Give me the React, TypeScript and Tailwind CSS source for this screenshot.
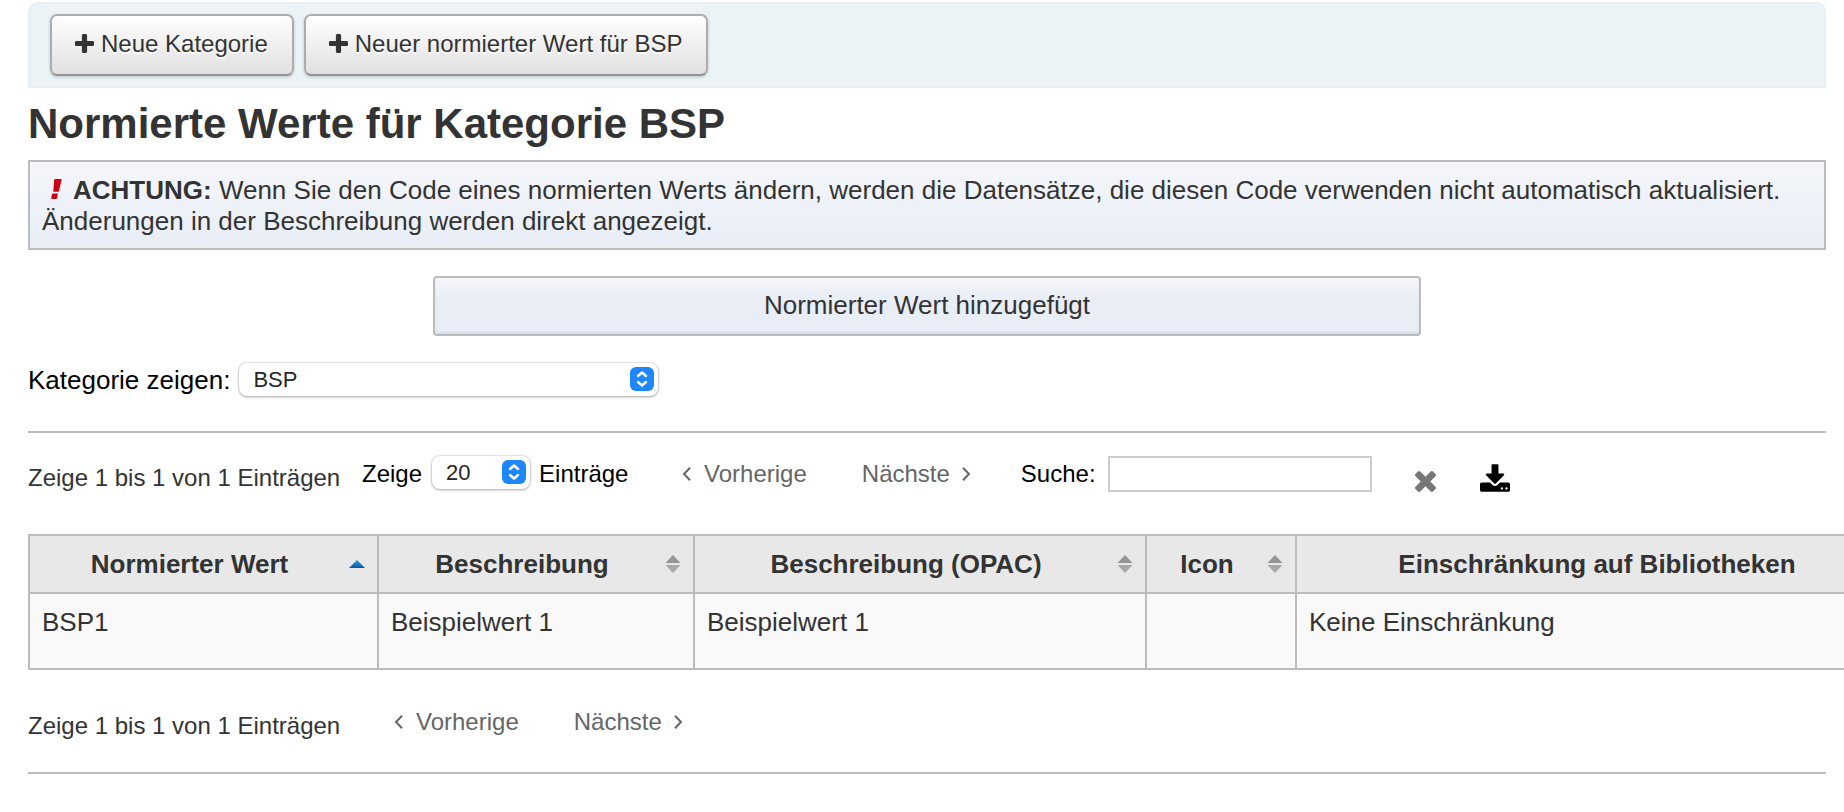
import type { ReactNode } from "react";

type SortState = "asc" | "none";

const columns: { label: string; sort: SortState; width: string }[] = [
  { label: "Normierter Wert", sort: "asc", width: "w-[349px]" },
  { label: "Beschreibung", sort: "none", width: "w-[316px]" },
  { label: "Beschreibung (OPAC)", sort: "none", width: "w-[452px]" },
  { label: "Icon", sort: "none", width: "w-[150px]" },
  { label: "Einschränkung auf Bibliotheken", sort: "none", width: "w-[630px]" },
];

const rows = [["BSP1", "Beispielwert 1", "Beispielwert 1", "", "Keine Einschränkung"]];

function PlusIcon() {
  return (
    <svg viewBox="192 128 1408 1408" className="size-[19px] fill-current" aria-hidden="true">
      <path d="M1600 736v192q0 40-28 68t-68 28h-416v416q0 40-28 68t-68 28h-192q-40 0-68-28t-28-68v-416h-416q-40 0-68-28t-28-68v-192q0-40 28-68t68-28h416v-416q0-40 28-68t68-28h192q40 0 68 28t28 68v416h416q40 0 68 28t28 68z" />
    </svg>
  );
}

function TimesIcon() {
  return (
    <svg viewBox="302 366 1188 1188" className="size-[21px] fill-current" aria-hidden="true">
      <path d="M1490 1322q0 40-28 68l-136 136q-28 28-68 28t-68-28l-294-294-294 294q-28 28-68 28t-68-28l-136-136q-28-28-28-68t28-68l294-294-294-294q-28-28-28-68t28-68l136-136q28-28 68-28t68 28l294 294 294-294q28-28 68-28t68 28l136 136q28 28 28 68t-28 68l-294 294 294 294q28 28 28 68z" />
    </svg>
  );
}

function DownloadIcon() {
  return (
    <svg viewBox="64 0 1664 1536" className="h-[28px] w-[30px] fill-current" aria-hidden="true">
      <path d="M1344 1344q0-26-19-45t-45-19-45 19-19 45 19 45 45 19 45-19 19-45zm256 0q0-26-19-45t-45-19-45 19-19 45 19 45 45 19 45-19 19-45zm128-224v320q0 40-28 68t-68 28h-1472q-40 0-68-28t-28-68v-320q0-40 28-68t68-28h465l135 136q58 56 136 56t136-56l136-136h464q40 0 68 28t28 68zm-325-569q17 41-14 70l-448 448q-18 19-45 19t-45-19l-448-448q-31-29-14-70 17-39 59-39h256v-448q0-26 19-45t45-19h256q26 0 45 19t19 45v448h256q42 0 59 39z" />
    </svg>
  );
}

function WarningIcon() {
  return (
    <svg viewBox="0 0 12 20" className="ml-2 mr-[11px] inline h-5 w-3 align-baseline fill-[#cc0011]" aria-hidden="true">
      <path d="M5 0h6q.8 0 .6.8L9 12q-.2.8-1 .8H4q-.8 0-.7-.8L4.200.8Q4.300 0 5 0zM3 14.400h4.200q.8 0 .6.8l-.8 4q-.2.8-1 .8H1.800q-.8 0-.6-.8l.8-4q.2-.8 1-.8z" />
    </svg>
  );
}

function SortIcon({ sort }: { sort: SortState }) {
  if (sort === "asc") {
    return (
      <svg viewBox="0 0 16 20" className="h-5 w-4 shrink-0" aria-hidden="true">
        <defs>
          <linearGradient id="sort-asc" x1="0" y1="0" x2="0" y2="1">
            <stop offset="0" stopColor="#2f9fdc" />
            <stop offset="1" stopColor="#0a55a3" />
          </linearGradient>
        </defs>
        <path d="M8 6l8 8H0z" fill="url(#sort-asc)" />
      </svg>
    );
  }
  return (
    <svg viewBox="0 0 16 20" className="h-5 w-4 shrink-0" aria-hidden="true">
      <path d="M8 1l7.500 8H.5z" fill="#959595" />
      <path d="M8 19l7.500-8H.5z" fill="#a8a8a8" />
    </svg>
  );
}

function ToolbarButton({ children }: { children: ReactNode }) {
  return (
    <button
      type="button"
      className="flex h-[62px] items-center gap-[7px] rounded-[7px] border-2 border-[#adadad] border-b-[#949494] bg-linear-to-b from-white to-[#e0e0e0] pb-[3px] pl-[23px] pr-6 text-[24px] text-[#333] shadow-[0_1px_3px_rgba(0,0,0,0.2)] [text-shadow:0_2px_0_#fff]"
    >
      <PlusIcon />
      {children}
    </button>
  );
}

function Select({ id, value, width }: { id: string; value: string; width: string }) {
  return (
    <span className={`relative inline-flex ${width}`}>
      <select
        id={id}
        className="h-[33px] w-full appearance-none rounded-[8px] bg-white pl-[14px] text-[22px] leading-[30px] text-[#262626] shadow-[0_0_2px_rgba(0,0,0,0.25),0_1px_3px_rgba(0,0,0,0.3)]"
      >
        <option>{value}</option>
      </select>
      <svg viewBox="0 0 24 24" className="pointer-events-none absolute right-1 top-1 size-6" aria-hidden="true">
        <rect width="24" height="24" rx="6" fill="#1f87fd" />
        <path d="M8 9l4-3.500 4 3.500M8 15l4 3.500 4-3.500" fill="none" stroke="#fff" strokeWidth="2.4" strokeLinecap="round" strokeLinejoin="round" />
      </svg>
    </span>
  );
}

function Chevron({ direction }: { direction: "left" | "right" }) {
  return (
    <svg viewBox="0 0 9 14" className="h-[14px] w-[9px]" aria-hidden="true">
      <path
        d={direction === "left" ? "M8 .8L2 7l6 6.200" : "M1 .8L7 7l-6 6.200"}
        fill="none"
        stroke="currentColor"
        strokeWidth="2"
      />
    </svg>
  );
}

function Pager() {
  return (
    <nav className="flex items-center gap-[55px] text-[24px] leading-[30px] text-[#666]">
      <button type="button" className="flex items-center gap-[13px]">
        <Chevron direction="left" />
        Vorherige
      </button>
      <button type="button" className="flex items-center gap-3">
        Nächste
        <Chevron direction="right" />
      </button>
    </nav>
  );
}

export default function App() {
  return (
    <main className="overflow-hidden bg-white px-7 pb-9 pt-0.5 font-['Liberation_Sans',Arial,sans-serif] text-[26px] leading-[31px] text-[#333]">
      <div className="-mr-2.5">
        <div className="flex gap-2.5 rounded-t-[10px] border-2 border-[#e6f0f2] bg-[#ebf3f6] px-5 pb-2.5 pt-2.5">
          <ToolbarButton>Neue Kategorie</ToolbarButton>
          <ToolbarButton>Neuer normierter Wert für BSP</ToolbarButton>
        </div>

        <h1 className="mb-3 mt-3 text-[42px] font-bold leading-[48px]">Normierte Werte für Kategorie BSP</h1>

        <div className="border-2 border-[#bcbcbc] bg-linear-to-b from-[#f4f6fa] to-[#e8edf6] px-3 pb-[11px] pt-[13px]">
          <WarningIcon />
          <strong>ACHTUNG:</strong> Wenn Sie den Code eines normierten Werts ändern, werden die Datensätze, die diesen
          Code verwenden nicht automatisch aktualisiert. Änderungen in der Beschreibung werden direkt angezeigt.
        </div>

        <div
          role="status"
          className="mx-auto mt-[26px] flex h-[60px] w-[55%] items-center justify-center rounded-[4px] border-2 border-[#bcbcbc] bg-linear-to-b from-[#f4f6fa] via-[#e8edf6] via-40% to-[#e8edf6] pb-px shadow-[inset_0_-2px_2px_#d4def0]"
        >
          Normierter Wert hinzugefügt
        </div>

        <div className="mt-[27px] flex items-center gap-[9px] text-black">
          <label htmlFor="category" className="pt-0.5">Kategorie zeigen:</label>
          <Select id="category" value="BSP" width="w-[419px]" />
        </div>

        <hr className="mt-[35px] border-t-2 border-[#bcbcbc]" />

        <div className="mt-[23px] flex h-9 items-start text-[24px] leading-[36px]">
          <span className="w-[334px] pt-1">Zeige 1 bis 1 von 1 Einträgen</span>
          <label htmlFor="length" className="mr-[10px] text-black">Zeige</label>
          <Select id="length" value="20" width="w-[98px]" />
          <span className="ml-[9px] w-[143px] text-black">Einträge</span>
          <div className="mr-[50px] pt-[3px]">
            <Pager />
          </div>
          <label htmlFor="search" className="mr-3 text-black">Suche:</label>
          <input id="search" type="text" className="h-9 w-[264px] border-2 border-[#ccc] bg-white px-2" />
          <button type="button" aria-label="Filter löschen" className="ml-[43px] mt-[15px] text-[#777]">
            <TimesIcon />
          </button>
          <button type="button" aria-label="Exportieren" className="ml-[44px] mt-2 text-black">
            <DownloadIcon />
          </button>
        </div>

        <table className="mt-[42px] w-[1897px] table-fixed border-collapse">
          <thead>
            <tr className="h-[58px] bg-[#e8e8e8]">
              {columns.map((column) => (
                <th key={column.label} className={`border-2 border-[#bcbcbc] py-0 pl-0 pr-3 font-bold ${column.width}`}>
                  <div className="flex items-center">
                    <span className="grow text-center">{column.label}</span>
                    <SortIcon sort={column.sort} />
                  </div>
                </th>
              ))}
            </tr>
          </thead>
          <tbody>
            {rows.map((row) => (
              <tr key={row[0]} className="h-[76px] bg-[#f9f9f9]">
                {row.map((cell, index) => (
                  <td key={index} className="border-2 border-[#bcbcbc] px-3 py-[13px] align-top">
                    {cell}
                  </td>
                ))}
              </tr>
            ))}
          </tbody>
        </table>

        <div className="mt-[34px] flex items-start text-[24px] leading-[36px]">
          <span className="w-[366px] pt-1">Zeige 1 bis 1 von 1 Einträgen</span>
          <div className="pt-[3px]">
            <Pager />
          </div>
        </div>

        <hr className="mt-[28px] border-t-2 border-[#bcbcbc]" />
      </div>
    </main>
  );
}
